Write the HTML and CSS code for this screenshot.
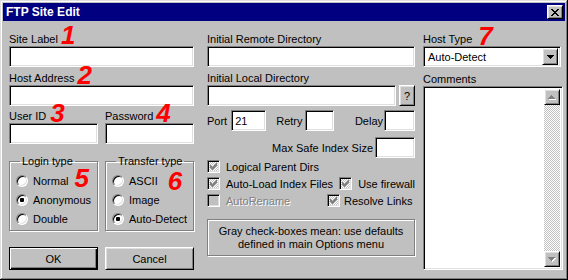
FILE: index.html
```html
<!DOCTYPE html>
<html lang="en">
<head>
  <meta charset="UTF-8">
  <title>FTP Site Edit</title>
  <link rel="stylesheet" href="styles.css">
</head>
<body>
  <div class="window">
    <div class="titlebar">
      <span>FTP Site Edit</span>
      <button class="btn close">
        <svg width="8" height="7" viewBox="0 0 8 7" shape-rendering="crispEdges"><path d="M0 0h2v1h1v1h2v-1h1v-1h2v1h-1v1h-1v1h-1v1h1v1h1v1h1v1h-2v-1h-1v-1h-2v1h-1v1h-2v-1h1v-1h1v-1h1v-1h-1v-1h-1v-1h-1z" fill="#000"/></svg>
      </button>
    </div>

    <div class="content">
      <!-- left column -->
      <div class="col col-left">
        <div class="lbl">Site Label<span class="num n1">1</span></div>
        <input class="field" type="text">
        <div class="lbl spaced">Host Address<span class="num n2">2</span></div>
        <input class="field" type="text">

        <div class="pair">
          <div>
            <div class="lbl">User ID<span class="num n3">3</span></div>
            <input class="field" type="text">
          </div>
          <div>
            <div class="lbl">Password<span class="num n4">4</span></div>
            <input class="field" type="text">
          </div>
        </div>

        <div class="pair groups">
          <fieldset class="group">
            <legend>Login type</legend>
            <div class="opt"><span class="radio"></span><span>Normal<span class="num n5">5</span></span></div>
            <div class="opt"><span class="radio on"></span><span>Anonymous</span></div>
            <div class="opt"><span class="radio"></span><span>Double</span></div>
          </fieldset>
          <fieldset class="group">
            <legend>Transfer type</legend>
            <div class="opt"><span class="radio"></span><span>ASCII<span class="num n6">6</span></span></div>
            <div class="opt"><span class="radio"></span><span>Image</span></div>
            <div class="opt"><span class="radio on"></span><span>Auto-Detect</span></div>
          </fieldset>
        </div>

        <div class="pair buttons">
          <button class="btn default">OK</button>
          <button class="btn">Cancel</button>
        </div>
      </div>

      <!-- middle column -->
      <div class="col col-mid">
        <div class="lbl">Initial Remote Directory</div>
        <input class="field" type="text">
        <div class="lbl spaced">Initial Local Directory</div>
        <div class="with-help">
          <input class="field" type="text">
          <button class="btn help">?</button>
        </div>

        <div class="timing">
          <span>Port</span>
          <input class="field port" type="text" value="21">
          <span class="retry-lbl">Retry</span>
          <input class="field retry" type="text">
          <span class="delay-lbl">Delay</span>
          <input class="field delay" type="text">
        </div>

        <div class="maxsize">
          <span>Max Safe Index Size</span>
          <input class="field" type="text">
        </div>

        <div class="checks">
          <div class="check-row">
            <span class="cell"><span class="cb gray"><svg width="7" height="7" viewBox="0 0 7 7" shape-rendering="crispEdges"><path d="M6 0h1v3h-1v1h-1v1h-1v1h-1v1h-1v-1h-1v-1h-1v-3h1v1h1v1h1v-1h1v-1h1v-1h1z" fill="#808080"/></svg></span>Logical Parent Dirs</span>
          </div>
          <div class="check-row">
            <span class="cell first-a"><span class="cb gray"><svg width="7" height="7" viewBox="0 0 7 7" shape-rendering="crispEdges"><path d="M6 0h1v3h-1v1h-1v1h-1v1h-1v1h-1v-1h-1v-1h-1v-3h1v1h1v1h1v-1h1v-1h1v-1h1z" fill="#808080"/></svg></span>Auto-Load Index Files</span>
            <span class="cell"><span class="cb gray"><svg width="7" height="7" viewBox="0 0 7 7" shape-rendering="crispEdges"><path d="M6 0h1v3h-1v1h-1v1h-1v1h-1v1h-1v-1h-1v-1h-1v-3h1v1h1v1h1v-1h1v-1h1v-1h1z" fill="#808080"/></svg></span>Use firewall</span>
          </div>
          <div class="check-row">
            <span class="cell first-b"><span class="cb off"></span><span class="disabled">AutoRename</span></span>
            <span class="cell"><span class="cb gray tight"><svg width="7" height="7" viewBox="0 0 7 7" shape-rendering="crispEdges"><path d="M6 0h1v3h-1v1h-1v1h-1v1h-1v1h-1v-1h-1v-1h-1v-3h1v1h1v1h1v-1h1v-1h1v-1h1z" fill="#808080"/></svg></span>Resolve Links</span>
          </div>
        </div>

        <div class="note">Gray check-boxes mean: use defaults<br>defined in main Options menu</div>
      </div>

      <!-- right column -->
      <div class="col col-right">
        <div class="lbl">Host Type<span class="num n7">7</span></div>
        <div class="field select">
          <span class="select-text">Auto-Detect</span>
          <span class="btn drop">
            <svg width="7" height="4" viewBox="0 0 7 4" shape-rendering="crispEdges"><path d="M0 0h7v1h-1v1h-1v1h-1v1h-1v-1h-1v-1h-1v-1h-1z" fill="#000"/></svg>
          </span>
        </div>
        <div class="lbl comments-lbl">Comments</div>
        <div class="field memo">
          <div class="scrollbar">
            <span class="btn sbtn">
              <svg width="8" height="5" viewBox="0 0 8 5" shape-rendering="crispEdges"><path d="M4 1h1v1h1v1h1v1h1v1h-7v-1h1v-1h1v-1h1z" fill="#fff"/><path d="M3 0h1v1h1v1h1v1h1v1h-7v-1h1v-1h1v-1h1z" fill="#808080"/></svg>
            </span>
            <span class="track"></span>
            <span class="btn sbtn">
              <svg width="8" height="5" viewBox="0 0 8 5" shape-rendering="crispEdges"><path d="M1 1h7v1h-1v1h-1v1h-1v1h-1v-1h-1v-1h-1v-1h-1z" fill="#fff"/><path d="M0 0h7v1h-1v1h-1v1h-1v1h-1v-1h-1v-1h-1v-1h-1z" fill="#808080"/></svg>
            </span>
          </div>
        </div>
      </div>
    </div>
  </div>
</body>
</html>
```

FILE: styles.css
```css
body {
  margin: 0;
  font-family: "Liberation Sans", Arial, sans-serif;
  font-size: 11px;
  color: #000;
  background: #c0c0c0;
}

.window {
  box-sizing: border-box;
  width: 568px;
  height: 280px;
  padding: 3px;
  background: #c0c0c0;
  box-shadow: inset -1px -1px #000, inset 1px 1px #dfdfdf, inset -2px -2px #808080, inset 2px 2px #fff;
}

.titlebar {
  height: 18px;
  padding: 0 2px 0 3px;
  display: flex;
  align-items: center;
  justify-content: space-between;
  background: #000080;
  color: #fff;
  font-size: 12px;
  font-weight: bold;
}

/* raised 3d button */
.btn {
  box-sizing: border-box;
  margin: 0;
  padding: 0;
  font: inherit;
  color: #000;
  background: #c0c0c0;
  border: 1px solid;
  border-color: #fff #000 #000 #fff;
  box-shadow: inset 1px 1px #dfdfdf, inset -1px -1px #808080;
  display: flex;
  align-items: center;
  justify-content: center;
}
.btn.default {
  border-color: #000;
  box-shadow: inset 1px 1px #fff, inset -1px -1px #000, inset -2px -2px #808080;
}

.close {
  width: 16px;
  height: 14px;
}

/* sunken field */
.field {
  display: block;
  box-sizing: border-box;
  width: 100%;
  height: 21px;
  margin: 0;
  padding: 0 3px;
  font: inherit;
  color: #000;
  background: #fff;
  border: 1px solid;
  border-color: #808080 #fff #fff #808080;
  box-shadow: inset 1px 1px #000, inset -1px -1px #dfdfdf;
  outline: none;
}

.content {
  display: flex;
  padding: 11px 0 0 6px;
  line-height: 14px;
}

.col-left { width: 185px; }
.col-mid { width: 208px; margin-left: 13px; }
.col-right { width: 140px; margin-left: 8px; }

.lbl {
  height: 14px;
  white-space: nowrap;
}
.lbl.spaced { margin-top: 4px; }

.num {
  font-size: 26px;
  font-weight: bold;
  font-style: italic;
  line-height: 0;
  color: #f00;
  vertical-align: -2px;
}
.n1 { margin-left: 3px; vertical-align: -1px; }
.n2 { margin-left: 3px; }
.n3 { margin-left: 4px; }
.n4 { margin-left: 3px; }
.n5 { margin-left: 6px; }
.n6 { margin-left: 10px; vertical-align: -5px; }
.n7 { margin-left: 6px; }

.pair {
  display: grid;
  grid-template-columns: 89px 89px;
  column-gap: 7px;
  margin-top: 3px;
}

.groups { margin-top: 10px; }

.group {
  margin: 0;
  padding: 3px 0 2px 6px;
  min-width: 0;
  border: 1px solid #808080;
  box-shadow: inset 1px 1px #fff, 1px 1px #fff;
}
.group legend {
  margin-left: 4px;
  padding: 0 2px;
  line-height: 14px;
}

.opt {
  display: flex;
  align-items: center;
  height: 19px;
  white-space: nowrap;
}

.radio {
  box-sizing: border-box;
  width: 12px;
  height: 12px;
  margin-right: 5px;
  border-radius: 50%;
  background: #fff;
  border: 1px solid;
  border-color: #808080 #fff #fff #808080;
  box-shadow: inset 1px 1px #000, inset -1px -1px #dfdfdf;
  display: flex;
  align-items: center;
  justify-content: center;
  flex: none;
}
.radio.on::after {
  content: "";
  width: 4px;
  height: 4px;
  border-radius: 1px;
  background: #000;
}

.buttons { margin-top: 16px; }
.buttons .btn { height: 23px; }

.with-help {
  display: flex;
  gap: 3px;
}
.help {
  width: 16px;
  height: 21px;
  flex: none;
}

.timing {
  display: flex;
  align-items: center;
  margin-top: 4px;
}
.timing .field { flex: none; }
.port { width: 35px; margin-left: 4px; }
.retry-lbl { margin-left: 10px; }
.retry { width: 29px; margin-left: 3px; }
.delay-lbl { margin-left: auto; }
.delay { width: 31px; margin-left: 1px; }

.maxsize {
  display: flex;
  align-items: center;
  justify-content: flex-end;
  gap: 2px;
  margin-top: 6px;
}
.maxsize .field { width: 40px; }

.check-row {
  display: flex;
  align-items: center;
  height: 17px;
  white-space: nowrap;
}
.cell {
  display: flex;
  align-items: center;
}
.first-a { width: 135px; }
.first-b { width: 120px; }

.cb {
  box-sizing: border-box;
  width: 13px;
  height: 13px;
  margin-right: 6px;
  border: 1px solid;
  border-color: #808080 #fff #fff #808080;
  box-shadow: inset 1px 1px #000, inset -1px -1px #dfdfdf;
  display: flex;
  align-items: center;
  justify-content: center;
  flex: none;
}
.cb.tight { margin-right: 4px; }
.cb.gray {
  background: repeating-conic-gradient(#c0c0c0 0 25%, #fff 0 50%) 0 0 / 2px 2px;
}
.cb.off { background: #c0c0c0; }

.disabled {
  color: #808080;
  text-shadow: 1px 1px #fff;
}

.note {
  box-sizing: border-box;
  height: 37px;
  margin-top: 10px;
  padding-top: 5px;
  border: 1px solid #808080;
  box-shadow: inset 1px 1px #fff, 1px 1px #fff;
  text-align: center;
  line-height: 13px;
}

.select {
  display: flex;
  align-items: center;
  width: 138px;
  padding: 2px 2px 2px 4px;
}
.select-text { flex: 1; }
.drop {
  width: 16px;
  height: 17px;
  flex: none;
}

.comments-lbl { margin-top: 5px; }

.memo {
  height: 184px;
  padding: 2px;
  display: flex;
  justify-content: flex-end;
}

.scrollbar {
  width: 16px;
  display: flex;
  flex-direction: column;
}
.sbtn {
  height: 16px;
  flex: none;
}
.track {
  flex: 1;
  background: repeating-conic-gradient(#c0c0c0 0 25%, #fff 0 50%) 0 0 / 2px 2px;
}
```
